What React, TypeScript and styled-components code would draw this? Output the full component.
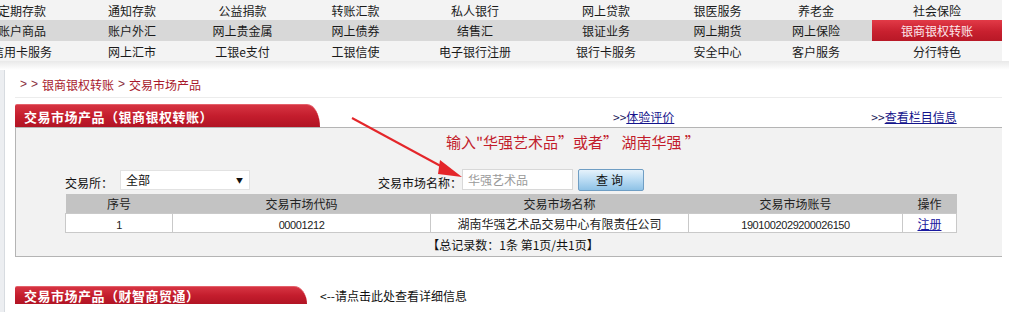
import React from 'react';
import styled, { createGlobalStyle } from 'styled-components';

const GlobalStyle = createGlobalStyle`
	html, body {
		margin: 0;
		padding: 0;
		background: #ffffff;
		overflow: hidden;
	}
	body {
		font-family: "Noto Sans CJK SC", "Noto Sans", sans-serif;
		font-size: 12px;
		color: #222;
	}
`;

const Page = styled.div`
	position: relative;
	width: 1009px;
	height: 312px;
	overflow: hidden;
`;

// top menu
const Menu = styled.div`
	display: grid;
	grid-template-columns: 110px 110px 111px 115px 124px 138px 85px 112px 130px;
	grid-template-rows: 20px 21px 20px;
	margin-left: -33px;
	width: 1035px;
`;

const MenuItem = styled.div<{ $shade: boolean; $active?: boolean }>`
	display: flex;
	align-items: center;
	justify-content: center;
	white-space: nowrap;
	font-size: 12px;
	color: ${(p) => (p.$active ? '#fde8ec' : '#1a1a1a')};
	background: ${(p) =>
		p.$active
			? 'linear-gradient(#e23a47, #c8202f 55%, #b81826)'
			: p.$shade
			? '#d8d8d8'
			: '#f3f3f3'};
`;

const Shade = styled.div`
	height: 9px;
	background: linear-gradient(#e9e9e9, #ffffff);
`;

const Body = styled.div`
	display: flex;
`;

const SideStrip = styled.div`
	width: 4px;
	background: #eceef1;
	border-right: 1px solid #d7dbe0;
	height: 260px;
`;

const Content = styled.div`
	width: 987px;
	padding-left: 10px;
`;

const Crumb = styled.div`
	display: flex;
	align-items: center;
	gap: 4px;
	height: 20px;
	margin-top: 4px;
	padding-left: 5px;
	color: #a8192c;
	font-size: 12px;
	border-bottom: 1px solid #ececec;
	padding-bottom: 3px;
`;

const Sep = styled.span`
	color: #8a3040;
	font-family: "Liberation Sans", sans-serif;
`;

const HeadRow = styled.div<{ $top: number }>`
	display: flex;
	align-items: center;
	margin-top: ${(p) => p.$top}px;
`;

const Tab = styled.div<{ $w: number; $h: number }>`
	width: ${(p) => p.$w}px;
	height: ${(p) => p.$h}px;
	box-sizing: border-box;
	padding-left: 9px;
	display: flex;
	align-items: center;
	color: #fff;
	font-weight: bold;
	font-size: 13px;
	letter-spacing: 0.5px;
	background: linear-gradient(#d63442, #c41d2d 50%, #b11424);
	border-top: 1px solid #e4606a;
	border-radius: 2px 13px 0 0 / 2px ${(p) => p.$h}px 0 0;
`;

const HeadLink = styled.span<{ $left: number }>`
	margin-left: ${(p) => p.$left}px;
	color: #1a1a5a;
	font-size: 12px;
	padding-top: 1px;
	a {
		color: #14148c;
		text-decoration: underline;
	}
`;

const Hint = styled.span`
	margin-left: 13px;
	font-size: 12px;
	color: #111;
`;

const Panel = styled.div`
	background: #f2f2f2;
	border-top: 1px solid #b4b4b4;
	border-left: 1px solid #b4b4b4;
	border-bottom: 1px solid #b4b4b4;
	height: 130px;
	box-sizing: border-box;
	padding-top: 4px;
`;

const Notice = styled.div`
	padding-left: 430px;
	color: #c21d2c;
	font-size: 15px;
	line-height: 20px;
`;

const FormRow = styled.div`
	display: flex;
	align-items: center;
	margin-top: 17px;
	padding-left: 49px;
	height: 21px;
`;

const Label = styled.span<{ $left?: number }>`
	margin-left: ${(p) => p.$left ?? 0}px;
	font-size: 12px;
	color: #111;
	padding-top: 5px;
`;

const Select = styled.div`
	margin-left: 7px;
	width: 130px;
	height: 20px;
	box-sizing: border-box;
	background: #fff;
	border: 1px solid #e2e2e2;
	display: flex;
	align-items: center;
	justify-content: space-between;
	padding: 0 6px 0 5px;
	font-size: 12px;
	color: #111;
`;

const Caret = styled.span`
	font-size: 7px;
	color: #111;
`;

const Input = styled.input`
	margin-left: 0;
	width: 111px;
	height: 21px;
	box-sizing: border-box;
	border: 1px solid #d8d8d8;
	background: #fff;
	padding: 0 5px;
	font-family: "Noto Sans CJK SC", sans-serif;
	font-size: 12px;
	outline: none;
	&::placeholder {
		color: #9a9a9a;
	}
`;

const Button = styled.button`
	margin-left: 5px;
	width: 66px;
	height: 22px;
	border: 1px solid #6f9ec4;
	border-radius: 2px;
	background: linear-gradient(#e6f2fb, #b9dbf3 50%, #8ec2e6);
	font-family: "Noto Sans CJK SC", sans-serif;
	font-size: 12px;
	letter-spacing: 3px;
	color: #111;
	padding: 0;
`;

const Table = styled.table`
	margin-top: 4px;
	margin-left: 49px;
	width: 892px;
	border-collapse: collapse;
	font-size: 12px;
	th {
		background: #c3c3c3;
		font-weight: normal;
		height: 19px;
		padding: 0;
		color: #222;
	}
	td {
		background: #fff;
		height: 18px;
		padding: 0;
		text-align: center;
		border: 1px solid #c9c9c9;
		color: #222;
	}
`;

const Num = styled.span`
	font-family: "Liberation Sans", sans-serif;
	font-size: 11px;
	letter-spacing: -0.4px;
`;

const RegLink = styled.a`
	color: #1a1aa0;
	text-decoration: underline;
`;

const Pager = styled.div`
	text-align: center;
	padding-left: 8px;
	margin-top: 3px;
	font-size: 12px;
	color: #111;
`;

const Arrow = styled.svg`
	position: absolute;
	left: 340px;
	top: 110px;
	pointer-events: none;
`;

const menuRows = [
	['定期存款', '通知存款', '公益捐款', '转账汇款', '私人银行', '网上贷款', '银医服务', '养老金', '社会保险'],
	['账户商品', '账户外汇', '网上贵金属', '网上债券', '结售汇', '银证业务', '网上期货', '网上保险', '银商银权转账'],
	['信用卡服务', '网上汇市', '工银e支付', '工银信使', '电子银行注册', '银行卡服务', '安全中心', '客户服务', '分行特色'],
];

function App() {
	return (
		<Page>
			<GlobalStyle />
			<Menu>
				{menuRows.map((row, r) =>
					row.map((item, c) => (
						<MenuItem key={item} $shade={r === 1} $active={r === 1 && c === 8}>
							{item}
						</MenuItem>
					))
				)}
			</Menu>
			<Shade />
			<Body>
				<SideStrip />
				<Content>
					<Crumb>
						<Sep>&gt;</Sep>
						<Sep>&gt;</Sep>
						<span>银商银权转账</span>
						<Sep>&gt;</Sep>
						<span>交易市场产品</span>
					</Crumb>
					<HeadRow $top={6}>
						<Tab $w={305} $h={23}>交易市场产品（银商银权转账）</Tab>
						<HeadLink $left={293}>
							&gt;&gt;<a>体验评价</a>
						</HeadLink>
						<HeadLink $left={197}>
							&gt;&gt;<a>查看栏目信息</a>
						</HeadLink>
					</HeadRow>
					<Panel>
						<Notice>输入"华强艺术品”或者” 湖南华强 ”</Notice>
						<FormRow>
							<Label>交易所：</Label>
							<Select>
								<span>全部</span>
								<Caret>▼</Caret>
							</Select>
							<Label $left={128}>交易市场名称：</Label>
							<Input placeholder="华强艺术品" />
							<Button>查询</Button>
						</FormRow>
						<Table>
							<thead>
								<tr>
									<th style={{ width: 107 }}>序号</th>
									<th style={{ width: 258 }}>交易市场代码</th>
									<th style={{ width: 258 }}>交易市场名称</th>
									<th style={{ width: 214 }}>交易市场账号</th>
									<th>操作</th>
								</tr>
							</thead>
							<tbody>
								<tr>
									<td><Num>1</Num></td>
									<td><Num>00001212</Num></td>
									<td>湖南华强艺术品交易中心有限责任公司</td>
									<td><Num>1901002029200026150</Num></td>
									<td><RegLink>注册</RegLink></td>
								</tr>
							</tbody>
						</Table>
						<Pager>【总记录数：1条 第1页/共1页】</Pager>
					</Panel>
					<HeadRow $top={29}>
						<Tab $w={292} $h={18}>交易市场产品（财智商贸通）</Tab>
						<Hint>&lt;--请点击此处查看详细信息</Hint>
					</HeadRow>
				</Content>
			</Body>
			<Arrow width="130" height="75" viewBox="0 0 130 75">
				<line x1="12" y1="8" x2="108" y2="60" stroke="#e4262a" strokeWidth="2" />
				<polygon points="122,67 100,50 98,64" fill="#e4262a" />
			</Arrow>
		</Page>
	);
}

export default App;
